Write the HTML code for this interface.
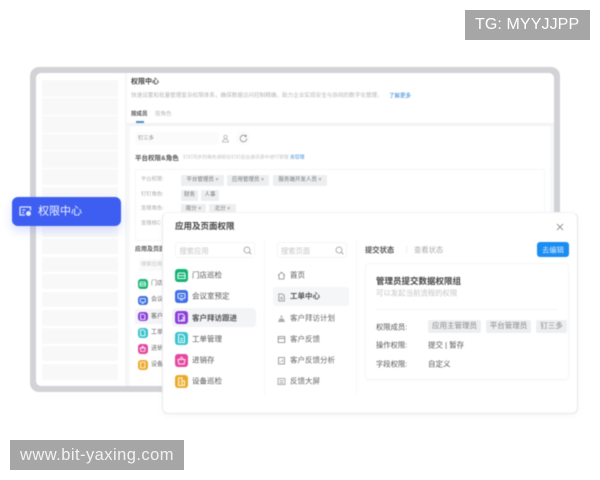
<!DOCTYPE html>
<html lang="zh"><head><meta charset="utf-8"><style>
html,body{margin:0;padding:0;background:#fff}
body{width:600px;height:480px;position:relative;overflow:hidden;font-family:"Liberation Sans","Noto Sans CJK SC",sans-serif;color:#444}
.a{position:absolute;white-space:nowrap}
.t{position:absolute;white-space:nowrap;transform:translateY(-50%);line-height:1}
.b{filter:blur(.45px)}
.chip{position:absolute;height:11px;background:#eceef0;border-radius:1px;font-size:5.500px;line-height:11px;color:#777;text-align:center;white-space:nowrap}
.sb{position:absolute;left:42px;width:76px;background:#f8f8f9;border-radius:2px}
.ic{position:absolute;border-radius:3px}
.ic svg,.p svg{display:block;width:100%;height:100%}
.p{position:absolute;left:276.500px;width:9px;height:9px}
</style></head><body>
<div class="b" style="position:absolute;left:0;top:0;width:600px;height:480px">
<div class="a" style="left:30px;top:67px;width:530px;height:325px;background:#d3d3d7;border-radius:9px"></div>
<div class="a" style="left:36px;top:73px;width:518px;height:313px;background:#fff;border-radius:5px"></div>
<div class="a" style="left:125px;top:73px;width:2px;height:313px;background:#f5f6f7"></div>
<div class="sb" style="top:80px;height:17px"></div><div class="sb" style="top:98px;height:17px"></div><div class="sb" style="top:116px;height:17px"></div><div class="sb" style="top:134px;height:16px"></div><div class="sb" style="top:151px;height:17px"></div><div class="sb" style="top:169px;height:16px"></div><div class="sb" style="top:187px;height:40px"></div><div class="sb" style="top:226px;height:11px"></div><div class="sb" style="top:239px;height:15px"></div><div class="sb" style="top:257px;height:15px"></div><div class="sb" style="top:274px;height:15px"></div><div class="sb" style="top:292px;height:15px"></div><div class="sb" style="top:310px;height:16px"></div><div class="sb" style="top:328px;height:16px"></div><div class="sb" style="top:346px;height:15px"></div><div class="sb" style="top:364px;height:16px"></div>

<div class="t" style="left:131px;top:82px;font-size:7px;font-weight:bold;color:#444">权限中心</div>
<div class="t" style="left:131px;top:97px;font-size:5.600px;color:#b5b5b5">快速设置和批量管理复杂权限体系，确保数据访问控制精确，助力企业实现安全与协同的数字化管理。</div>
<div class="t" style="left:389px;top:97px;font-size:5.500px;font-weight:bold;color:#6ba8de">了解更多</div>
<div class="t" style="left:131px;top:115px;font-size:5.500px;font-weight:bold;color:#555">按成员</div>
<div class="t" style="left:155px;top:115px;font-size:5.500px;color:#b8b8b8">按角色</div>
<div class="a" style="left:136px;top:121px;width:8px;height:1.500px;background:#4a8fd0"></div>
<div class="a" style="left:127px;top:123px;width:427px;height:3px;background:#f2f3f4"></div>
<div class="a" style="left:127px;top:126px;width:3px;height:260px;background:#f7f8f8"></div>
<div class="a" style="left:550px;top:126px;width:4px;height:260px;background:#f7f8fa"></div>
<div class="a" style="left:135px;top:132px;width:84px;height:13px;background:#fbfbfb;border-radius:2px"></div>
<div class="t" style="left:138px;top:138.500px;font-size:5.300px;color:#888">钉三多</div>
<svg class="a" style="left:221px;top:134px" width="9" height="9" viewBox="0 0 9 9" fill="none" stroke="#aaa" stroke-width=".7"><circle cx="4.500" cy="3" r="1.700"/><path d="M1.500 8c.2-2 1.500-2.800 3-2.800s2.800.8 3 2.800z"/></svg>
<div class="a" style="left:236px;top:131px;width:14px;height:14px;background:#fbfbfb;border-radius:7px"></div>
<svg class="a" style="left:238.500px;top:133.500px" width="9" height="9" viewBox="0 0 9 9" fill="none" stroke="#888" stroke-width=".8"><path d="M7.800 4.500a3.300 3.300 0 1 1-1-2.400M7.200 .8v1.700H5.500"/></svg>
<div class="t" style="left:135px;top:159px;font-size:6.500px;font-weight:bold;color:#555">平台权限&amp;角色</div>
<div class="t" style="left:183px;top:159px;font-size:4.800px;color:#c2c2c2">钉钉同步的角色请前往钉钉后台通讯录中进行管理</div>
<div class="t" style="left:290px;top:159px;font-size:4.800px;font-weight:bold;color:#7ab3e4">去管理</div>
<div class="a" style="left:135px;top:169px;width:410px;height:72px;border:1px solid #f6f6f7;box-sizing:border-box;border-radius:2px"></div>
<div class="t" style="left:141px;top:180px;font-size:5.300px;color:#aaa">平台权限:</div>
<div class="t" style="left:141px;top:195px;font-size:5.300px;color:#aaa">钉钉角色:</div>
<div class="t" style="left:141px;top:209px;font-size:5.300px;color:#aaa">宣搭角色:</div>
<div class="t" style="left:141px;top:224px;font-size:5.300px;color:#aaa">宣搭核C</div>
<div class="chip" style="left:181px;top:175px;width:43px">平台管理员 ×</div>
<div class="chip" style="left:227px;top:175px;width:42px">应用管理员 ×</div>
<div class="chip" style="left:273px;top:175px;width:54px">服务端开发人员 ×</div>
<div class="chip" style="left:181px;top:190px;width:17px">财务</div>
<div class="chip" style="left:201px;top:190px;width:18px">人事</div>
<div class="chip" style="left:181px;top:204px;width:25px">南分 ×</div>
<div class="chip" style="left:209px;top:204px;width:27px">北分 ×</div>
<div class="t" style="left:135px;top:250px;font-size:6px;font-weight:bold;color:#555">应用及页面</div>
<div class="a" style="left:139px;top:259px;width:30px;height:12px;background:#fafafa"></div>
<div class="t" style="left:141px;top:265px;font-size:5.300px;color:#c4c4c4">搜索应用</div>
<div class="a" style="left:135px;top:309px;width:30px;height:15px;background:#f4f4f6;border-radius:2px"></div>
<div class="ic" style="left:138px;top:279px;width:9.500px;height:9.500px;background:#1bb276"><svg viewBox="0 0 13 13" fill="none" stroke="#e6fff4" stroke-width="1.300"><path d="M3.500 4h6l.7 2v3.500h-7.400V6zM2.800 6.800h7.400"/></svg></div>
<div class="ic" style="left:138px;top:295.500px;width:9.500px;height:9.500px;background:#3f6fe0"><svg viewBox="0 0 13 13" fill="none" stroke="#e6eeff" stroke-width="1.300"><rect x="3" y="3.500" width="7" height="5" rx="1"/><path d="M5 10h3"/></svg></div>
<div class="ic" style="left:138px;top:311.500px;width:9.500px;height:9.500px;background:#8a3fd8"><svg viewBox="0 0 13 13" fill="none" stroke="#f2e6ff" stroke-width="1.300"><path d="M3.500 3h4.500l1.500 2v5h-6z"/></svg></div>
<div class="ic" style="left:138px;top:328px;width:9.500px;height:9.500px;background:#3cc2c9"><svg viewBox="0 0 13 13" fill="none" stroke="#e6fdff" stroke-width="1.300"><path d="M3.500 2.500h4l2 2v6h-6z"/></svg></div>
<div class="ic" style="left:138px;top:344px;width:9.500px;height:9.500px;background:#e2489e"><svg viewBox="0 0 13 13" fill="none" stroke="#ffe6f3" stroke-width="1.300"><path d="M3 5.500h7l-.8 4.500H3.800zM4.500 5.500L6.500 3l2 2.500"/></svg></div>
<div class="ic" style="left:138px;top:360px;width:9.500px;height:9.500px;background:#eaaa2e"><svg viewBox="0 0 13 13" fill="none" stroke="#fff5dc" stroke-width="1.300"><path d="M3.500 3h6v7.500h-6z"/></svg></div>
<div class="t" style="left:151px;top:284px;font-size:6px;color:#666">门店</div>
<div class="t" style="left:151px;top:300px;font-size:6px;color:#666">会议</div>
<div class="t" style="left:151px;top:316.500px;font-size:6px;color:#555">客户</div>
<div class="t" style="left:151px;top:333px;font-size:6px;color:#666">工单</div>
<div class="t" style="left:151px;top:349px;font-size:6px;color:#666">进销</div>
<div class="t" style="left:151px;top:365px;font-size:6px;color:#666">设备</div>

<div class="a" style="left:12px;top:197px;width:109px;height:29px;background:#3d5ef0;border-radius:6px;box-shadow:0 5px 10px rgba(61,94,240,.18)"></div>
<svg class="a" style="left:18px;top:204px" width="15" height="15" viewBox="0 0 15 15" fill="none" stroke="#dfe5ff" stroke-width="1.300"><path d="M2 3h10.500v3.500M2 3v8h5"/><path d="M4.300 6h3M4.300 8.500h1.700"/><circle cx="10.500" cy="9.500" r="2.500" fill="#dfe5ff" stroke="none"/></svg>
<div class="t" style="left:38px;top:211.500px;font-size:11px;color:#f3f5ff">权限中心</div>

<div class="a" style="left:162px;top:212px;width:416px;height:202px;box-sizing:border-box;background:#fff;border:1px solid #e3e6ec;border-top-color:#f3f4f6;border-left-color:#e9ebf0;border-radius:6px;box-shadow:0 2px 6px rgba(120,130,150,.06)"></div>
<div class="t" style="left:175px;top:226px;font-size:8.500px;font-weight:bold;color:#444">应用及页面权限</div>
<svg class="a" style="left:556px;top:223px" width="8" height="8" viewBox="0 0 8 8" stroke="#777" stroke-width=".8"><path d="M1 1l6 6M7 1L1 7"/></svg>

<div class="a" style="left:175px;top:242px;width:80px;height:16px;box-sizing:border-box;border:1px solid #f4f5f6;border-radius:3px"></div>
<div class="t" style="left:179.500px;top:250.500px;font-size:7.300px;color:#c5c5c5">搜索应用</div>
<svg class="a" style="left:242.500px;top:245.500px" width="9" height="9" viewBox="0 0 9 9" fill="none" stroke="#999" stroke-width=".8"><circle cx="4" cy="4" r="3"/><path d="M6.200 6.200L8.300 8.300"/></svg>
<div class="a" style="left:172px;top:308px;width:84px;height:19px;background:#f3f4f6;border-radius:4px"></div>
<div class="ic" style="left:175px;top:268.500px;width:13px;height:13px;background:#14b373"><svg viewBox="0 0 13 13" fill="none" stroke="#e6fff4" stroke-width="1"><path d="M3.500 4h6l.7 2v3.500h-7.400V6zM2.800 6.800h7.400"/></svg></div>
<div class="ic" style="left:175px;top:289.500px;width:13px;height:13px;background:#3f6fe4"><svg viewBox="0 0 13 13" fill="none" stroke="#e6eeff" stroke-width="1"><rect x="3" y="3.500" width="7" height="5" rx="1"/><path d="M5 10h3M5 6h3"/></svg></div>
<div class="ic" style="left:175px;top:311px;width:13px;height:13px;background:#8b3fdb"><svg viewBox="0 0 13 13" fill="none" stroke="#f2e6ff" stroke-width="1"><path d="M3.500 3h4.500l1.500 2v5h-6zM7 6a1.500 1.500 0 1 1-1 2.500"/></svg></div>
<div class="ic" style="left:175px;top:332px;width:13px;height:13px;background:#3cc3cb"><svg viewBox="0 0 13 13" fill="none" stroke="#e6fdff" stroke-width="1"><path d="M3.500 2.500h4l2 2v6h-6zM5 6.500h3M5 8.500h3"/></svg></div>
<div class="ic" style="left:175px;top:353.500px;width:13px;height:13px;background:#e5499f"><svg viewBox="0 0 13 13" fill="none" stroke="#ffe6f3" stroke-width="1"><path d="M3 5.500h7l-.8 4.500H3.800zM4.500 5.500L6.500 3l2 2.500"/></svg></div>
<div class="ic" style="left:175px;top:374.500px;width:13px;height:13px;background:#e9ab2d"><svg viewBox="0 0 13 13" fill="none" stroke="#fff5dc" stroke-width="1"><path d="M3.500 3h3.500v7.500H3.500zM7 6h2.500v4.500H7M5 5.500v.5M5 7.500v.5"/></svg></div>
<div class="t" style="left:192px;top:275px;font-size:7.500px;color:#555">门店巡检</div>
<div class="t" style="left:192px;top:296px;font-size:7.500px;color:#555">会议室预定</div>
<div class="t" style="left:192px;top:317.500px;font-size:7.500px;font-weight:bold;color:#555">客户拜访跟进</div>
<div class="t" style="left:192px;top:339px;font-size:7.500px;color:#555">工单管理</div>
<div class="t" style="left:192px;top:360px;font-size:7.500px;color:#555">进销存</div>
<div class="t" style="left:192px;top:381px;font-size:7.500px;color:#555">设备巡检</div>

<div class="a" style="left:264px;top:240px;width:1px;height:155px;background:#f5f6f7"></div>
<div class="a" style="left:277px;top:242px;width:70px;height:16px;box-sizing:border-box;border:1px solid #f4f5f6;border-radius:3px"></div>
<div class="t" style="left:281px;top:250.500px;font-size:7.300px;color:#c5c5c5">搜索页面</div>
<svg class="a" style="left:334.500px;top:245.500px" width="9" height="9" viewBox="0 0 9 9" fill="none" stroke="#999" stroke-width=".8"><circle cx="4" cy="4" r="3"/><path d="M6.200 6.200L8.300 8.300"/></svg>
<div class="a" style="left:273px;top:287px;width:76px;height:19px;background:#f5f6f7;border-radius:3px"></div>
<div class="p" style="top:271px"><svg viewBox="0 0 9 9" fill="none" stroke="#888" stroke-width=".8"><path d="M1 4.500L4.500 1.200 8 4.500M2 4v4h5V4"/></svg></div>
<div class="p" style="top:292.500px"><svg viewBox="0 0 9 9" fill="none" stroke="#888" stroke-width=".8"><path d="M1.800 1h3.700l1.800 1.800V8H1.800zM3.200 4.500h2.600M3.200 6h2.600"/></svg></div>
<div class="p" style="top:313.500px"><svg viewBox="0 0 9 9" fill="#aaa"><path d="M4.500 1l1.400 2.500h-2.800zM2.500 4.500h4L8 8H1z"/></svg></div>
<div class="p" style="top:334.500px"><svg viewBox="0 0 9 9" fill="none" stroke="#888" stroke-width=".8"><rect x="1.200" y="1.500" width="6.600" height="6"/><path d="M1.200 3.500h6.600"/></svg></div>
<div class="p" style="top:356px"><svg viewBox="0 0 9 9" fill="none" stroke="#888" stroke-width=".8"><rect x="1.500" y="1.500" width="6" height="6.500"/><path d="M3.500 6V5M5.500 6V3.500"/></svg></div>
<div class="p" style="top:377px"><svg viewBox="0 0 9 9" fill="none" stroke="#999" stroke-width=".8"><rect x="1" y="1.500" width="7" height="6"/><path d="M2.500 5.800h4M2.500 4l1.500-.5 1.500.5 1-.5"/></svg></div>
<div class="t" style="left:290px;top:275px;font-size:7.500px;color:#555">首页</div>
<div class="t" style="left:290px;top:296px;font-size:7.500px;font-weight:bold;color:#555">工单中心</div>
<div class="t" style="left:290px;top:317.500px;font-size:7.500px;color:#666">客户拜访计划</div>
<div class="t" style="left:290px;top:339px;font-size:7.500px;color:#666">客户反馈</div>
<div class="t" style="left:290px;top:360px;font-size:7.500px;color:#666">客户反馈分析</div>
<div class="t" style="left:290px;top:381px;font-size:7.500px;color:#666">反馈大屏</div>

<div class="a" style="left:356px;top:240px;width:1px;height:155px;background:#f5f6f7"></div>
<div class="t" style="left:365px;top:249.500px;font-size:7.300px;font-weight:bold;color:#555">提交状态</div>
<div class="a" style="left:406px;top:246px;width:1px;height:7px;background:#eee"></div>
<div class="t" style="left:414px;top:249.500px;font-size:7.300px;color:#aaa">查看状态</div>
<div class="a" style="left:537px;top:242px;width:32px;height:15px;background:#1a8cf2;border-radius:3px"></div>
<div class="t" style="left:542px;top:249.500px;font-size:7.300px;color:#d8ecff">去编辑</div>
<div class="a" style="left:365px;top:263px;width:204px;height:117px;box-sizing:border-box;border:1px solid #f5f6f7;border-radius:4px;box-shadow:0 1px 3px rgba(0,0,0,.02)"></div>
<div class="t" style="left:376px;top:280.500px;font-size:8.500px;font-weight:bold;color:#444">管理员提交数据权限组</div>
<div class="t" style="left:376px;top:292.500px;font-size:7.400px;color:#c4c4c4">可以发起当前流程的权限</div>
<div class="a" style="left:376px;top:309px;width:182px;height:1px;background:#f4f5f6"></div>
<div class="t" style="left:376px;top:326.500px;font-size:7.300px;color:#555">权限成员:</div>
<div class="t" style="left:376px;top:345px;font-size:7.300px;color:#555">操作权限:</div>
<div class="t" style="left:376px;top:364px;font-size:7.300px;color:#555">字段权限:</div>
<div class="chip" style="left:428px;top:320px;width:53px;height:12.500px;line-height:12.500px;font-size:7.500px;color:#888;border-radius:2px">应用主管理员</div>
<div class="chip" style="left:486px;top:320px;width:45px;height:12.500px;line-height:12.500px;font-size:7.500px;color:#888;border-radius:2px">平台管理员</div>
<div class="chip" style="left:536px;top:320px;width:31px;height:12.500px;line-height:12.500px;font-size:7.500px;color:#888;border-radius:2px">钉三多</div>
<div class="t" style="left:428px;top:345px;font-size:7.500px;color:#555">提交 | 暂存</div>
<div class="t" style="left:428px;top:364px;font-size:7.500px;color:#555">自定义</div>
</div>

<div class="a" style="left:465px;top:10px;width:125px;height:30px;background:#a6a6a6"></div>
<div class="t" style="left:475px;top:25px;font-size:16px;color:#fff;letter-spacing:.1px">TG: MYYJJPP</div>
<div class="a" style="left:10px;top:440px;width:174px;height:30px;background:#a6a6a6"></div>
<div class="t" style="left:20px;top:455px;font-size:16.500px;letter-spacing:.45px;color:#f2f2f2">www.bit-yaxing.com</div>
</body></html>
